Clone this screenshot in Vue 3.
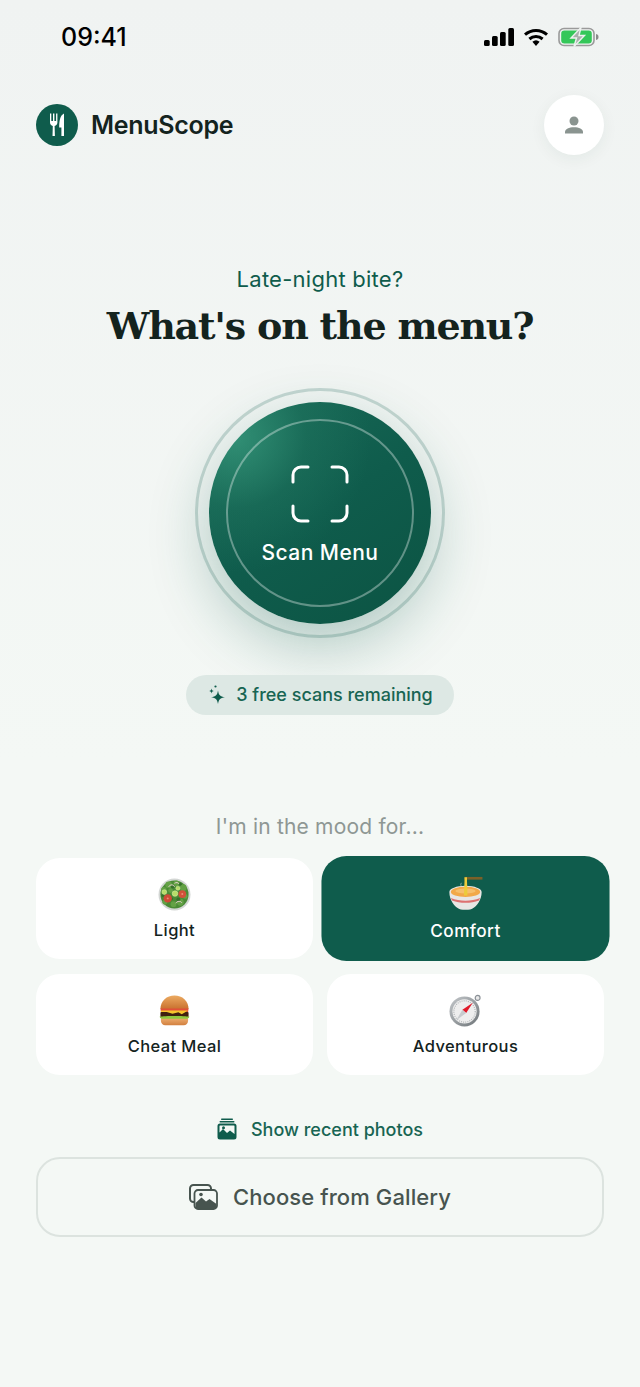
<script setup>
const moods = [
  { id: 'salad', label: 'Light' },
  { id: 'ramen', label: 'Comfort', active: true },
  { id: 'burger', label: 'Cheat Meal' },
  { id: 'compass', label: 'Adventurous' },
]
</script>

<template>
  <div class="page">
    <div class="status">
      <span class="time">09:41</span>
      <div class="status-icons">
        <svg width="30" height="20" viewBox="0 0 30 20"><rect x="0" y="13" width="5.700" height="6" rx="1.500"/><rect x="8" y="9" width="5.700" height="10" rx="1.500"/><rect x="16" y="5" width="5.700" height="14" rx="1.500"/><rect x="24.300" y="1" width="5.700" height="18" rx="1.500"/></svg>
        <svg width="26" height="20" viewBox="0 0 26 20"><path d="M13 19l-3.600-4.200a5.500 5.500 0 0 1 7.200 0z"/><path d="M2 7.600a16.500 16.500 0 0 1 22 0" fill="none" stroke="#000" stroke-width="3"/><path d="M6.400 12a10 10 0 0 1 13.200 0" fill="none" stroke="#000" stroke-width="3"/></svg>
        <svg class="battery" width="42" height="20" viewBox="0 0 42 20">
          <rect x="1" y="1.500" width="35" height="17" rx="5" fill="none" stroke="#9a9a9a" stroke-width="1.600"/>
          <rect x="3.200" y="3.600" width="30.600" height="12.800" rx="3.200" fill="#34c759"/>
          <path d="M38 7c2 .4 2.500 1.500 2.500 3S40 12.600 38 13z" fill="#8a8a8a"/>
          <path d="M23 .5 13 11h5.500l-2.500 8.500L26.500 8.500H21z" fill="#a9afac" stroke="#eef2f0" stroke-width="1.400"/>
        </svg>
      </div>
    </div>

    <header class="top">
      <div class="brand">
        <span class="logo">
          <svg width="24" height="24" viewBox="0 0 24 24" fill="#fff"><path d="M5 .5h1.300V8H8V.5h1.400V8h1.700V.5h1.300v9c0 1.800-1.200 3-2.800 3.400l.3 10.100H7.500l.3-10.100C6.200 12.500 5 11.300 5 9.500z"/><path d="M19 .5V23h-2.600v-8.500h-2.200C14.200 8 15 2.500 19 .5z"/></svg>
        </span>
        <span class="brand-name">MenuScope</span>
      </div>
      <button class="avatar" aria-label="Profile">
        <svg width="22" height="22" viewBox="0 0 22 22" fill="#8a9490"><circle cx="11" cy="7" r="4.500"/><path d="M2 19.500V18c0-3 4-4.800 9-4.800s9 1.800 9 4.800v1.500z"/></svg>
      </button>
    </header>

    <section class="hero">
      <p class="greeting">Late-night bite?</p>
      <h1>What's on the menu?</h1>
      <div class="ring">
        <button class="scan">
          <span class="scan-inner">
            <svg width="58" height="58" viewBox="0 0 58 58" fill="none" stroke="#fff" stroke-width="3" stroke-linecap="round"><path d="M2 17v-7a8 8 0 0 1 8-8h7M41 2h7a8 8 0 0 1 8 8v7M56 41v7a8 8 0 0 1-8 8h-7M17 56h-7a8 8 0 0 1-8-8v-7"/></svg>
            <span class="scan-label">Scan Menu</span>
          </span>
        </button>
      </div>
      <div class="pill">
        <svg width="20" height="22" viewBox="0 0 20 22" fill="#0f5c4c"><path d="M11 6.500c.8 4.600 2 5.900 7 6.800-5 .9-6.200 2.200-7 6.800-.8-4.600-2-5.900-7-6.800 5-.9 6.200-2.200 7-6.800z"/><path d="M4.500 4.500c.3 1.700.8 2.200 2.500 2.500-1.700.3-2.200.8-2.500 2.500C4.200 7.800 3.700 7.300 2 7c1.700-.3 2.200-.8 2.500-2.500z"/><circle cx="8.500" cy="2.500" r="1.100"/></svg>
        <span>3 free scans remaining</span>
      </div>
    </section>

    <section class="mood">
      <p class="mood-title">I'm in the mood for...</p>
      <div class="grid">
        <button v-for="m in moods" :key="m.id" class="card" :class="{ active: m.active }">
          <svg v-if="m.id === 'salad'" class="emoji" viewBox="0 0 34 34">
            <circle cx="17" cy="17" r="16.500" fill="#d3d6d4"/>
            <circle cx="17" cy="17" r="14.500" fill="#4a8a36"/>
            <g fill="#63a145">
              <circle cx="11" cy="7" r="3.500"/><circle cx="19" cy="5.500" r="3"/><circle cx="26" cy="10" r="3.500"/><circle cx="6" cy="12" r="2.800"/>
              <circle cx="13" cy="13" r="2.500"/><circle cx="28" cy="19" r="2.500"/><circle cx="23" cy="25" r="3.500"/><circle cx="16" cy="27" r="3"/><circle cx="7" cy="25" r="2.500"/>
            </g>
            <g fill="#35702a">
              <circle cx="15" cy="9" r="1.800"/><circle cx="23" cy="6.500" r="1.500"/><circle cx="21" cy="22" r="2"/><circle cx="5" cy="18" r="1.500"/><circle cx="14" cy="21.500" r="1.500"/>
            </g>
            <g fill="#b6dd69" stroke="#e4f2b0" stroke-width=".5">
              <circle cx="17.500" cy="16" r="2.900"/><circle cx="6.500" cy="14.500" r="2.500"/><circle cx="20.500" cy="10.500" r="2.100"/>
            </g>
            <circle cx="10" cy="21" r="4.300" fill="#cf4a36"/><circle cx="25" cy="16.500" r="4" fill="#d2503a"/>
            <circle cx="10" cy="21" r="1" fill="#e98f76"/><circle cx="25" cy="16.500" r="1" fill="#e98f76"/>
            <path d="M11 9c1.500-2.500 5-2.500 6 0M17 5.500c1.500-1.200 4-1 4.500.5M18.500 26c1-2.500 5-2.500 6-.5" fill="none" stroke="#ecd0d8" stroke-width="1"/>
          </svg>
          <svg v-else-if="m.id === 'ramen'" class="emoji" viewBox="0 0 34 34">
            <rect x="16" y="0" width="18" height="2.800" fill="#7a6028"/>
            <path d="M13 6c-2 2 1 3-1 5" fill="none" stroke="#9fb8ae" stroke-width=".8"/>
            <path d="M1 15c0-3 7-6 16-6s16 3 16 6c0 8-5 14-9 16.500-1 .8-3 1.200-7 1.200s-6-.4-7-1.200C6 29 1 23 1 15z" fill="#e8e6e4"/>
            <ellipse cx="17" cy="15" rx="14.500" ry="5" fill="#f2a848"/>
            <ellipse cx="17" cy="14" rx="10" ry="2.500" fill="#f6bf6c"/>
            <path d="M2.500 21c9 3.500 20 3.500 29 0l-1.200 2.600c-8 3-18.600 3-26.600 0z" fill="#dd7070"/>
            <path d="M16 .5h2.500v4l.5 14h-3.500l.5-14z" fill="#eccb3a"/>
          </svg>
          <svg v-else-if="m.id === 'burger'" class="emoji" viewBox="0 0 34 34">
            <defs>
              <linearGradient id="bun" x1="0" y1="0" x2="0" y2="1"><stop offset="0" stop-color="#ecab62"/><stop offset="1" stop-color="#c9712f"/></linearGradient>
              <linearGradient id="bun2" x1="0" y1="0" x2="0" y2="1"><stop offset="0" stop-color="#eaa86a"/><stop offset="1" stop-color="#d2803f"/></linearGradient>
            </defs>
            <path d="M2.500 15.500C2.500 7 9 1.500 17 1.500S31.500 7 31.500 15.500z" fill="url(#bun)"/>
            <path d="M2.500 15h29l-.5 3.500H3z" fill="#e2503a"/>
            <path d="M2.500 19c4-1.500 25-1.500 29 0v5.500h-29z" fill="#40200f"/>
            <path d="M3 17h28l-6.500 3.800-3.500-2-6 1.500L9 18.500H3z" fill="#f7c52c"/>
            <path d="M1.500 23.500c6-1 25-1 31 0l-2 2.300h-27z" fill="#8fc93f"/>
            <path d="M3 25.500h28v2c0 2.800-2 4.700-4.500 4.700h-19C5 32.200 3 30.300 3 27.500z" fill="url(#bun2)"/>
          </svg>
          <svg v-else class="emoji" viewBox="0 0 34 34">
            <defs>
              <linearGradient id="metal" x1="0" y1="0" x2="1" y2="1"><stop offset="0" stop-color="#c4c8cb"/><stop offset="1" stop-color="#6e7478"/></linearGradient>
            </defs>
            <circle cx="29.500" cy="4" r="2.500" fill="#e8e8e8" stroke="#8a9096" stroke-width="1.200"/>
            <circle cx="16" cy="18" r="15.500" fill="url(#metal)"/>
            <circle cx="16" cy="18" r="12.500" fill="#eeeeee"/>
            <circle cx="16" cy="18" r="11" fill="none" stroke="#aeb2b4" stroke-width="1.200" stroke-dasharray="1 1.200"/>
            <path d="M24.500 9 13.800 16.300l3.900 3.400z" fill="#e01a2a"/>
            <path d="M7.500 27 13.800 16.300l3.900 3.400z" fill="#c8cbce"/>
          </svg>
          <span class="card-label">{{ m.label }}</span>
        </button>
      </div>
    </section>

    <div class="recent">
      <svg width="20" height="22" viewBox="0 0 20 22" fill="#0f5c4c"><rect x="4" y="0.500" width="12" height="1.500" rx=".7"/><rect x="2.500" y="3" width="15" height="1.500" rx=".7"/><path fill-rule="evenodd" d="M3 5.500h14A2.500 2.500 0 0 1 19.500 8v11a2.500 2.500 0 0 1-2.500 2.500H3A2.500 2.500 0 0 1 .5 19V8A2.500 2.500 0 0 1 3 5.500zM2.500 14.500 6 11l4 4 3-2.500 4.500 3.500V8a.5.5 0 0 0-.5-.5H3a.5.5 0 0 0-.5.5z"/><circle cx="6.500" cy="9.800" r="1.500"/></svg>
      <span>Show recent photos</span>
    </div>

    <button class="gallery">
      <svg width="29" height="26" viewBox="0 0 29 26"><rect x="1" y="1" width="21" height="17" rx="3.500" fill="none" stroke="#47544f" stroke-width="2"/><rect x="5.500" y="6" width="22.500" height="19" rx="3.500" fill="#f4f8f5" stroke="#47544f" stroke-width="1.800"/><path d="M6.500 19l6-5.500 4.500 4 3.500-2.500 7 5v2.500a2 2 0 0 1-2 2H8.500a2 2 0 0 1-2-2z" fill="#47544f"/><circle cx="12" cy="10.500" r="1.800" fill="#47544f"/></svg>
      <span>Choose from Gallery</span>
    </button>
  </div>
</template>

<style>
html, body { margin: 0; background: #f4f8f5; }
</style>

<style scoped>
.page {
  width: 640px;
  height: 1387px;
  overflow: hidden;
  box-sizing: border-box;
  background: linear-gradient(180deg, #f0f3f2 0%, #f4f8f5 55%, #f4f8f5 100%);
  font-family: Inter, "Liberation Sans", sans-serif;
  color: #14231e;
}
button { font-family: inherit; border: 0; padding: 0; }
p, h1 { margin: 0; }

.status {
  height: 72px;
  box-sizing: border-box;
  padding: 2px 40px 0 61px;
  display: flex;
  justify-content: space-between;
  align-items: center;
}
.time { font-size: 25px; font-weight: 500; color: #000; line-height: 28px; }
.status-icons { display: flex; align-items: center; gap: 9px; }
.status-icons svg { display: block; }

.top {
  display: flex;
  justify-content: space-between;
  align-items: center;
  padding: 23px 36px 0;
}
.brand { display: flex; align-items: center; gap: 13px; }
.logo {
  width: 42px; height: 42px; border-radius: 50%;
  background: #0f5c4c;
  display: flex; align-items: center; justify-content: center;
}
.brand-name { font-size: 25px; line-height: 32px; font-weight: 600; letter-spacing: -0.3px; color: #14231e; }
.avatar {
  width: 60px; height: 60px; border-radius: 50%;
  background: #fff;
  box-shadow: 0 4px 16px rgba(20, 60, 50, 0.06);
  display: flex; align-items: center; justify-content: center;
}

.hero { display: flex; flex-direction: column; align-items: center; padding-top: 110px; }
.greeting { font-size: 22px; line-height: 28px; letter-spacing: 0.25px; color: #0f5c4c; }
h1 {
  margin-top: 8px;
  font-family: "DejaVu Serif", "Liberation Serif", serif;
  font-size: 38px; line-height: 50px; font-weight: 700;
  letter-spacing: -1.2px;
  color: #14231e;
}
.ring {
  margin-top: 37px;
  width: 250px; height: 250px; box-sizing: border-box;
  border-radius: 50%;
  border: 3px solid rgba(15, 92, 76, 0.2);
  display: flex; align-items: center; justify-content: center;
}
.scan {
  width: 222px; height: 222px; flex: none; border-radius: 50%;
  background:
    radial-gradient(circle at 12% 16%, rgba(60, 160, 130, 0.7) 0%, rgba(40, 130, 105, 0.28) 26%, rgba(15, 92, 76, 0) 50%),
    linear-gradient(145deg, #1a6b58 0%, #0f5c4c 50%, #0c5443 100%);
  box-shadow: 0 22px 60px rgba(15, 92, 76, 0.3);
  display: flex; align-items: center; justify-content: center;
}
.scan-inner {
  width: 188px; height: 188px; box-sizing: border-box;
  border-radius: 50%;
  border: 2px solid rgba(255, 255, 255, 0.35);
  display: flex; flex-direction: column; align-items: center;
  padding-top: 44px;
}
.scan-inner svg { display: block; }
.scan-label { margin-top: 16px; font-size: 21px; line-height: 28px; font-weight: 500; letter-spacing: 0.45px; color: #fff; }

.pill {
  margin-top: 37px;
  width: 268px; height: 40px; box-sizing: border-box;
  border-radius: 20px;
  background: #dde8e4;
  display: flex; align-items: center; justify-content: center; gap: 9px;
  font-size: 18px; line-height: 24px; font-weight: 500; color: #186553;
}

.mood { margin-top: 98px; padding: 0 36px; }
.mood-title { text-align: center; font-size: 21px; line-height: 28px; letter-spacing: 0.2px; color: #8e9794; }
.grid {
  margin-top: 17px;
  display: grid;
  grid-template-columns: 1fr 1fr;
  gap: 15px 14px;
}
.card {
  height: 101px;
  border-radius: 24px;
  background: #fff;
  display: flex; flex-direction: column; align-items: center;
  padding-top: 20px;
  box-sizing: border-box;
  color: #14231e;
}
.card.active {
  background: #0f5c4c;
  color: #fff;
  transform: scale(1.04);
}
.emoji { width: 33px; height: 33px; display: block; }
.card-label { margin-top: 8px; font-size: 16.500px; line-height: 22px; font-weight: 500; letter-spacing: 0.4px; }

.recent {
  margin-top: 42px;
  height: 24px;
  display: flex; align-items: center; justify-content: center; gap: 14px;
  font-size: 18px; font-weight: 500; color: #186553;
}
.gallery {
  margin: 16px 36px 0;
  width: 568px; height: 80px; box-sizing: border-box;
  border: 2px solid #dce3df;
  border-radius: 24px;
  background: transparent;
  display: flex; align-items: center; justify-content: center; gap: 15px;
  font-size: 22px; font-weight: 500; letter-spacing: 0.1px; color: #47544f;
}
</style>
